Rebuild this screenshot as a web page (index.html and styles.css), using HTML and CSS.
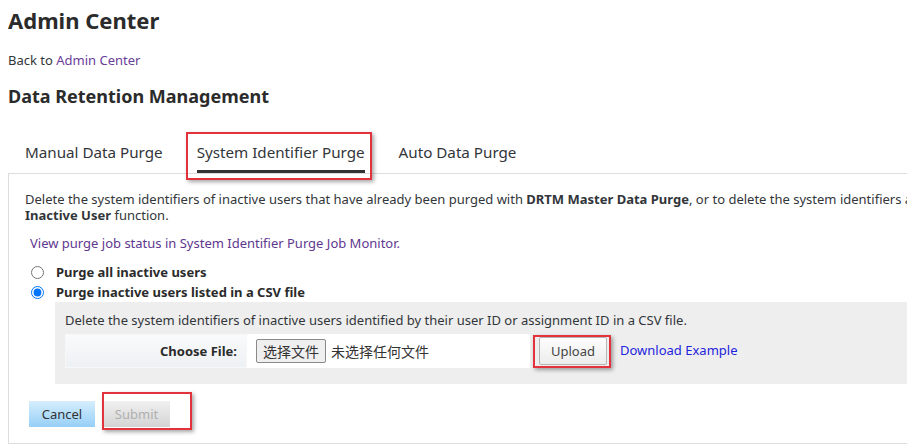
FILE: index.html
```html
<!DOCTYPE html>
<html lang="en">
<head>
  <meta charset="UTF-8" />
  <title>Admin Center - Data Retention Management</title>
  <meta name="viewport" content="width=device-width, initial-scale=1.0" />
  <link rel="stylesheet" href="styles.css">
</head>
<body>

  <h1 class="page-title">Admin Center</h1>
  <p class="back">Back to <a href="#">Admin Center</a></p>
  <h2 class="section-title">Data Retention Management</h2>

  <div class="tabs">
    <span class="tab">Manual Data Purge</span>
    <span class="tab active mark mark-tab">System Identifier Purge</span>
    <span class="tab">Auto Data Purge</span>
  </div>

  <div class="panel">
    <p class="intro">Delete the system identifiers of inactive users that have already been purged with <b>DRTM Master Data Purge</b>, or to delete the system identifiers and purge the users with <b>Purge</b><br><b>Inactive User</b> function.</p>

    <a class="monitor-link" href="#">View purge job status in System Identifier Purge Job Monitor.</a>

    <div class="options">
      <label class="option"><input type="radio" name="purge" /> Purge all inactive users</label>
      <label class="option"><input type="radio" name="purge" checked /> Purge inactive users listed in a CSV file</label>
    </div>

    <div class="csv-box">
      <div class="csv-note">Delete the system identifiers of inactive users identified by their user ID or assignment ID in a CSV file.</div>
      <div class="csv-row">
        <div class="file-table">
          <div class="file-label">Choose File:</div>
          <div class="file-value">
            <span class="file-btn">选择文件</span>
            <span class="file-none">未选择任何文件</span>
          </div>
        </div>
        <span class="mark mark-upload"><button type="button" class="btn-upload">Upload</button></span>
        <a class="download" href="#">Download Example</a>
      </div>
    </div>

    <div class="actions">
      <button type="button" class="btn btn-cancel">Cancel</button>
      <span class="mark mark-submit"><button type="button" class="btn btn-submit" disabled>Submit</button></span>
    </div>
  </div>

</body>
</html>
```

FILE: styles.css
```css
html { overflow: hidden; }
body {
  margin: 8px;
  font-family: "Noto Sans", "Liberation Sans", sans-serif;
  font-size: 13px;
  line-height: 16px;
  color: #32363a;
  background: #fff;
}
a { text-decoration: none; }

.page-title { margin: 0; font-size: 22px; line-height: 24px; font-weight: bold; color: #2b2b2b; }
.back { margin: 20px 0 0; }
.back a { color: #6a3d9a; }
.section-title { margin: 16px 0 0; font-size: 18px; line-height: 24px; font-weight: bold; color: #2b2b2b; }

.tabs { display: flex; margin-top: 34px; padding-left: 17px; }
.tab {
  font-size: 15.2px;
  line-height: 20px;
  padding-bottom: 8px;
  border-bottom: 3px solid transparent;
  margin-right: 34px;
  color: #32363a;
}
.tab.active { border-bottom-color: #333; }

.mark { position: relative; display: inline-block; }
.mark::after {
  content: "";
  position: absolute;
  border: 2px solid #e2323b;
  box-shadow: 2px 2px 4px rgba(0, 0, 0, 0.35);
  pointer-events: none;
}
.mark-tab::after { left: -11px; right: -7px; top: -10px; bottom: -10px; }
.mark-upload { margin-left: 9px; }
.mark-upload::after { left: -6px; right: -4px; top: -2px; bottom: -3px; }
.mark-submit::after { left: -1px; right: -22px; top: -9px; bottom: -3px; }

.panel {
  width: 1200px;
  border: 1px solid #ddd;
  padding: 17px 16px 16px;
}
.intro { margin: 0; white-space: nowrap; }
.monitor-link { display: block; margin: 12px 0 0 5px; color: #60388f; }

.options { margin-top: 11px; }
.option {
  display: flex;
  align-items: center;
  height: 20px;
  font-weight: bold;
  color: #2b2b2b;
}
.option input { margin: 0 12px 0 6px; width: 13px; height: 13px; }

.csv-box {
  margin-left: 30px;
  background: #eee;
  padding: 10px 10px 16px;
}
.csv-row { display: flex; align-items: center; margin-top: 6px; }
.file-table { display: flex; width: 465px; height: 34px; }
.file-label {
  width: 182px;
  box-sizing: border-box;
  padding-right: 9px;
  display: flex;
  align-items: center;
  justify-content: flex-end;
  font-weight: bold;
  color: #2b2b2b;
  background: linear-gradient(#f9fafb, #eef1f4);
  border: 1px solid #f7f7f7;
}
.file-value {
  flex: 1;
  background: #fff;
  display: flex;
  align-items: center;
  padding-left: 9px;
  font-family: "Noto Sans CJK SC", sans-serif;
  font-size: 14px;
  color: #333;
}
.file-btn {
  height: 22px;
  line-height: 22px;
  padding: 0 6px;
  border: 1px solid #8a8a8a;
  border-radius: 2px;
  background: #efefef;
  margin-right: 5px;
}
.btn-upload {
  display: block;
  width: 68px;
  height: 28px;
  font-family: "Noto Sans", "Liberation Sans", sans-serif;
  font-size: 13px;
  color: #444;
  background: linear-gradient(#fdfdfd, #ececec);
  border: 1px solid #b5b5b5;
  border-radius: 2px;
}
.download { margin-left: 13px; color: #2424dc; margin-top: -3px; }

.actions { display: flex; margin: 17px 0 0 4px; }
.btn {
  height: 26px;
  border: none;
  font-family: "Noto Sans", "Liberation Sans", sans-serif;
  font-size: 13px;
  padding: 0;
}
.btn-cancel {
  width: 66px;
  color: #333;
  background: linear-gradient(#d6eefd, #96cff7);
  margin-right: 8px;
}
.btn-submit {
  display: block;
  width: 67px;
  color: #b0b0b0;
  background: linear-gradient(#f0f0f0, #d4d4d4);
}
```
